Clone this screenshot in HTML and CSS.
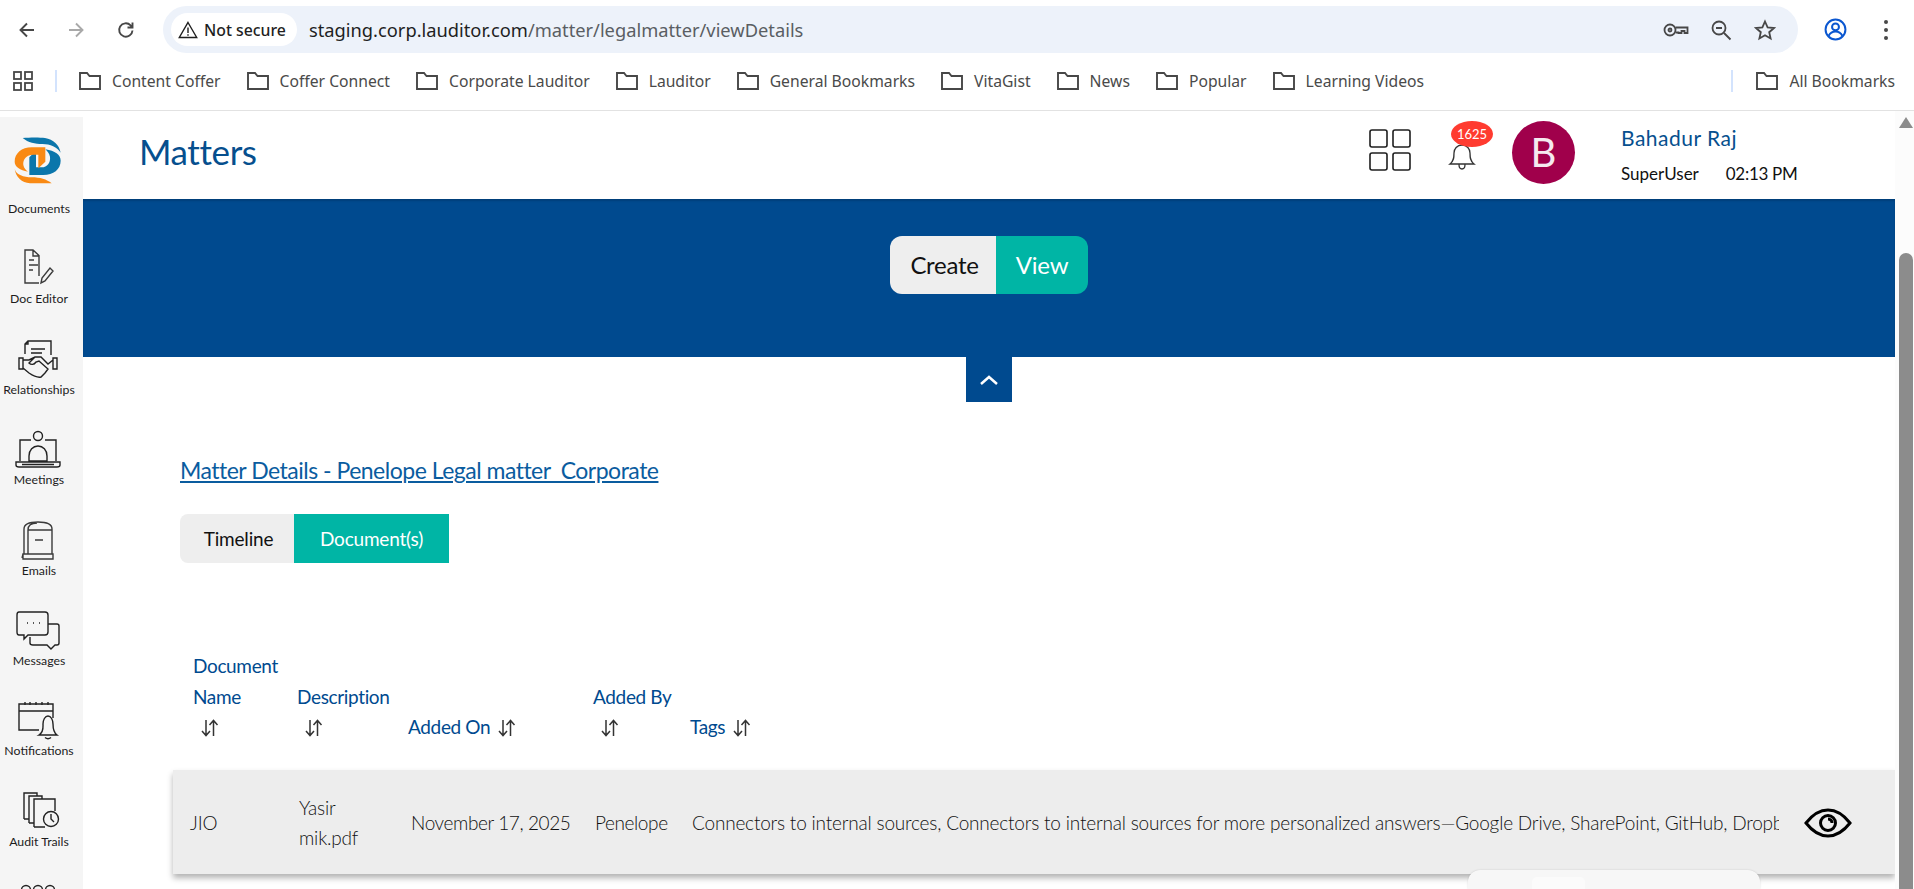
FILE: index.html
```html
<!DOCTYPE html>
<html lang="en">
<head>
<meta charset="utf-8">
<title>Matters</title>
<link rel="stylesheet" href="styles.css">
</head>
<body>
<header class="browser">
  <div class="toolbar">
    <svg class="tb-icon back" viewBox="0 0 20 20"><path d="M17 10H4M10 3.5 3.5 10l6.500 6.500"/></svg>
    <svg class="tb-icon forward" viewBox="0 0 20 20"><path d="M3 10h13M10 3.500l6.500 6.500-6.500 6.500"/></svg>
    <svg class="tb-icon reload" viewBox="0 0 20 20"><path d="M16.500 10.500a6.700 6.700 0 1 1-1.900-5.200L16.500 7.500M16.500 2.500v5h-5"/></svg>
    <div class="omnibox">
      <div class="chip">
        <svg class="warn" viewBox="0 0 20 18"><path d="M10 1.500 18.700 16.500H1.300ZM10 6.500v5.500M10 13.200v1.500"/></svg>
        <span>Not secure</span>
      </div>
      <div class="url"><span class="host">staging.corp.lauditor.com</span>/matter/legalmatter/viewDetails</div>
      <div class="omni-actions">
        <svg class="om-icon key" viewBox="0 0 26 20"><circle cx="7" cy="10" r="5.500"/><circle cx="7" cy="10" r="1.500"/><path d="M12.500 7.500H24.500V13H21.500V11H18.500V13H15.500V12.500H12.500"/></svg>
        <svg class="om-icon zoom" viewBox="0 0 22 22"><circle cx="9" cy="9" r="6.500"/><path d="M6 9h6M14 14l6.500 6.500"/></svg>
        <svg class="om-icon star" viewBox="0 0 22 22"><path d="M11 2.500 13.600 8.400 20 9 15.200 13.200 16.600 19.500 11 16.200 5.400 19.500 6.800 13.200 2 9 8.400 8.400Z"/></svg>
      </div>
    </div>
    <svg class="profile" viewBox="0 0 22 22"><circle cx="11" cy="11" r="9.500"/><circle cx="11" cy="8.500" r="3.300"/><path d="M4.500 17c1.500-3 3.800-4 6.500-4s5 1 6.500 4"/></svg>
    <div class="kebab"><i></i><i></i><i></i></div>
  </div>
  <div class="bookmarks">
    <svg class="apps" viewBox="0 0 20 20"><rect x="1" y="1" width="7" height="7"/><rect x="12" y="1" width="7" height="7"/><rect x="1" y="12" width="7" height="7"/><rect x="12" y="12" width="7" height="7"/></svg>
    <span class="bm-sep"></span>
    <div class="bm"><svg class="folder" viewBox="0 0 24 20"><path d="M2 2H9L11.500 5H22V18H2Z"/></svg>Content Coffer</div>
    <div class="bm"><svg class="folder" viewBox="0 0 24 20"><path d="M2 2H9L11.500 5H22V18H2Z"/></svg>Coffer Connect</div>
    <div class="bm"><svg class="folder" viewBox="0 0 24 20"><path d="M2 2H9L11.500 5H22V18H2Z"/></svg>Corporate Lauditor</div>
    <div class="bm"><svg class="folder" viewBox="0 0 24 20"><path d="M2 2H9L11.500 5H22V18H2Z"/></svg>Lauditor</div>
    <div class="bm"><svg class="folder" viewBox="0 0 24 20"><path d="M2 2H9L11.500 5H22V18H2Z"/></svg>General Bookmarks</div>
    <div class="bm"><svg class="folder" viewBox="0 0 24 20"><path d="M2 2H9L11.500 5H22V18H2Z"/></svg>VitaGist</div>
    <div class="bm"><svg class="folder" viewBox="0 0 24 20"><path d="M2 2H9L11.500 5H22V18H2Z"/></svg>News</div>
    <div class="bm"><svg class="folder" viewBox="0 0 24 20"><path d="M2 2H9L11.500 5H22V18H2Z"/></svg>Popular</div>
    <div class="bm"><svg class="folder" viewBox="0 0 24 20"><path d="M2 2H9L11.500 5H22V18H2Z"/></svg>Learning Videos</div>
    <span class="bm-sep right"></span>
    <div class="bm"><svg class="folder" viewBox="0 0 24 20"><path d="M2 2H9L11.500 5H22V18H2Z"/></svg>All Bookmarks</div>
  </div>
</header>

<div class="app">
  <aside class="sidebar">
    <div class="logo">
      <svg viewBox="0 0 90 85" class="logo-svg">
        <g transform="scale(0.3333)">
          <path class="l-blue" d="M68 54C90 52 120 52 135 54C160 58 178 75 182 98C172 82 150 72 128 72C105 72 85 68 68 54Z"/>
          <path class="l-blue" d="M88 165V112L108 92V142H125C142 142 152 128 150 110C148 100 142 94 136 88C165 92 182 105 182 122C182 148 160 165 130 165Z"/>
          <path class="l-orange" d="M136 82V125L115 145V104H100C80 104 68 118 70 135C72 145 78 150 84 155C60 150 44 140 44 125C44 100 65 82 95 82Z"/>
          <path class="l-orange" d="M44 148C50 165 70 172 95 172C120 172 140 178 155 190C130 190 110 190 90 190C65 188 48 172 44 148Z"/>
        </g>
      </svg>
    </div>
    <nav class="nav">
      <div class="nav-item first"><span>Documents</span></div>
      <div class="nav-item">
        <svg class="ni thin" viewBox="0 0 46 40"><path d="M24 27V6.500L18 1H10V34H24M18 1V7H24M14 11H19M14 16H23M14 21H18M26 34 L27 29 35 19 38 22 30 32Z"/></svg>
        <span>Doc Editor</span>
      </div>
      <div class="nav-item">
        <svg class="ni" viewBox="0 0 46 40"><path d="M10 14V4L13 1H36V15M10 4H13V1M16 9H30M16 13H27M4 18H8V29H4ZM38 18H42V29H38ZM8 20H14L20 17H26L33 24 38 20M20 17 14 23C16 25 19 25 21 22L24 21 33 29 30 33 26 37C22 38 17 35 14 33L8 28"/></svg>
        <span>Relationships</span>
      </div>
      <div class="nav-item">
        <svg class="ni" viewBox="0 0 46 40"><circle cx="23" cy="6" r="4.500"/><path d="M5 31V10H16M30 10H41V31M14 31V26C14 20 18 16 23 16S32 20 32 26V31ZM1 32H45V35C45 36 44 37 42 37H4C2 37 1 36 1 35ZM7 34.500H39" /></svg>
        <span>Meetings</span>
      </div>
      <div class="nav-item">
        <svg class="ni thin" viewBox="0 0 46 40"><path d="M9 33V8C9 3 14 1 23 1S37 3 37 8V33M13 33V9C13 4 17 2 22 2M13 9H37M8 33H38V38H8ZM8 33 7 37M20 19H28"/></svg>
        <span>Emails</span>
      </div>
      <div class="nav-item">
        <svg class="ni" viewBox="0 0 46 40"><path d="M4 1H30Q33 1 33 4V21Q33 24 30 24H13L9 28V24H4Q2 24 2 21V4Q2 1 4 1ZM33 13H42Q44 13 44 15V32Q44 34 42 34H40L36 38 32 34H18Q15 34 15 32V26M12 12H13M18 12H19M24 12H25"/></svg>
        <span>Messages</span>
      </div>
      <div class="nav-item">
        <svg class="ni" viewBox="0 0 46 40"><path d="M24 29H4V3H38V17M4 10H38M10 1V4M15 1V4M21 1V4M27 1V4M33 1V4M24 34C29 31 28 26 28 23C28 19 30 15 33 15S38 19 38 23C38 26 38 31 42 34ZM30 36.500Q33 39 36 36.500"/></svg>
        <span>Notifications</span>
      </div>
      <div class="nav-item">
        <svg class="ni" viewBox="0 0 46 40"><path d="M9 27V1H22V4M14 31V4H27V7M19 35V7H40V19M19 35H30M14 31H19M9 27H14"/><circle cx="36" cy="27" r="7.500"/><path d="M36 22V27L39 30"/></svg>
        <span>Audit Trails</span>
      </div>
      <div class="nav-item last">
        <svg class="ni" viewBox="0 0 46 40"><circle cx="11" cy="8" r="4.500"/><circle cx="23" cy="8" r="4.500"/><circle cx="35" cy="8" r="4.500"/></svg>
      </div>
    </nav>
  </aside>

  <main class="main">
    <div class="topbar">
      <h1 class="page-title">Matters</h1>
      <svg class="grid-icon" viewBox="0 0 43 43"><rect x="1" y="1" width="17" height="17" rx="2"/><rect x="24" y="1" width="17" height="17" rx="2"/><rect x="1" y="24" width="17" height="17" rx="2"/><rect x="24" y="24" width="17" height="17" rx="2"/></svg>
      <div class="bell-wrap">
        <svg class="bell" viewBox="0 0 28 28"><path d="M2 21C6 18 6 14 6 10C6 6 9 2 14 2S22 6 22 10C22 14 22 18 26 21ZM11 21.500Q11 26 14 26T17 21.500"/></svg>
        <span class="badge">1625</span>
      </div>
      <div class="avatar">B</div>
      <div class="user">
        <div class="user-name">Bahadur Raj</div>
        <div class="user-meta"><span>SuperUser</span><span class="user-time">02:13 PM</span></div>
      </div>
    </div>

    <section class="band">
      <div class="toggle">
        <span class="toggle-off">Create</span>
        <span class="toggle-on">View</span>
      </div>
    </section>
    <div class="collapse">
      <svg viewBox="0 0 20 12"><path d="M2 10 10 3l8 7"/></svg>
    </div>

    <a class="matter-link" href="#">Matter Details - Penelope Legal matter_Corporate</a>

    <div class="tabs">
      <span class="tab">Timeline</span>
      <span class="tab active">Document(s)</span>
    </div>

    <div class="table">
      <div class="thead cols">
        <div class="th c1">Document Name <svg class="sort own" viewBox="0 0 18 18"><path d="M5 1V16M1 12 5 16.500 9 12M12.500 17V2M8.500 6 12.500 1.500 16.500 6"/></svg></div>
        <div class="th c2">Description <svg class="sort own" viewBox="0 0 18 18"><path d="M5 1V16M1 12 5 16.500 9 12M12.500 17V2M8.500 6 12.500 1.500 16.500 6"/></svg></div>
        <div class="th c3">Added On <svg class="sort" viewBox="0 0 18 18"><path d="M5 1V16M1 12 5 16.500 9 12M12.500 17V2M8.500 6 12.500 1.500 16.500 6"/></svg></div>
        <div class="th c4">Added By <svg class="sort own" viewBox="0 0 18 18"><path d="M5 1V16M1 12 5 16.500 9 12M12.500 17V2M8.500 6 12.500 1.500 16.500 6"/></svg></div>
        <div class="th c5">Tags <svg class="sort" viewBox="0 0 18 18"><path d="M5 1V16M1 12 5 16.500 9 12M12.500 17V2M8.500 6 12.500 1.500 16.500 6"/></svg></div>
      </div>
      <div class="tr cols">
        <div class="td c1">JIO</div>
        <div class="td c2">Yasir mik.pdf</div>
        <div class="td c3">November 17, 2025</div>
        <div class="td c4">Penelope</div>
        <div class="td c5 clip">Connectors to internal sources, Connectors to internal sources for more personalized answers—Google Drive, SharePoint, GitHub, Dropbox</div>
        <div class="td c6">
          <svg class="eye" viewBox="0 0 48 30"><path d="M2 15C9 6 16 2 24 2S39 6 46 15C39 24 32 28 24 28S9 24 2 15Z"/><circle cx="24" cy="15" r="7.500"/><path d="M24 11a4 4 0 0 1 4 4"/></svg>
        </div>
      </div>
    </div>

    <div class="float-card"><span class="float-tab"></span></div>
  </main>

  <div class="scrollbar">
    <span class="sb-up"></span>
    <span class="sb-thumb"></span>
  </div>
</div>
</body>
</html>
```
FILE: styles.css
```css
* { box-sizing: border-box; }
html, body { margin: 0; height: 889px; overflow: hidden; background: #fff; }
body { font-family: "Lato", "Liberation Sans", sans-serif; color: #222; }

/* browser chrome */
.browser { height: 111px; border-bottom: 1px solid #e2e2e2; font-family: "Noto Sans", "Liberation Sans", sans-serif; }
.toolbar { height: 59px; display: flex; align-items: center; padding-left: 17px; }
.tb-icon { width: 20px; height: 20px; fill: none; stroke: #474747; stroke-width: 1.9; }
.tb-icon.forward { margin-left: 29px; stroke: #a9a9a9; }
.tb-icon.reload { margin-left: 30px; }
.omnibox { margin-left: 27px; width: 1635px; height: 47px; border-radius: 24px; background: #edf2fa; display: flex; align-items: center; padding-left: 8px; }
.chip { width: 126px; height: 33px; border-radius: 17px; background: #fff; display: flex; align-items: center; padding-left: 7px; gap: 6px; font-size: 15.8px; font-weight: 500; color: #1f1f1f; white-space: nowrap; }
.warn { width: 20px; height: 18px; flex: none; fill: none; stroke: #1f1f1f; stroke-width: 1.4; }
.url { margin-left: 12px; font-size: 18.3px; color: #5a5e63; white-space: nowrap; }
.host { color: #1f1f1f; }
.omni-actions { margin-left: auto; display: flex; align-items: center; padding-right: 22px; }
.om-icon { fill: none; stroke: #474747; stroke-width: 1.8; }
.key { width: 26px; height: 20px; }
.zoom { width: 22px; height: 22px; margin-left: 21px; }
.star { width: 22px; height: 22px; margin-left: 22px; }
.profile { width: 23px; height: 23px; margin-left: 26px; fill: none; stroke: #0b57d0; stroke-width: 1.9; }
.kebab { margin-left: 37px; display: flex; flex-direction: column; gap: 4px; }
.kebab i { width: 4px; height: 4px; border-radius: 50%; background: #474747; display: block; }

.bookmarks { height: 51px; display: flex; align-items: center; padding: 0 0 8px 13px; font-size: 15.7px; color: #4a4a4a; white-space: nowrap; }
.apps { width: 20px; height: 20px; fill: none; stroke: #474747; stroke-width: 1.8; }
.bm-sep { width: 2px; height: 22px; background: #d3e3fd; margin: 0 21px 0 22px; }
.bm-sep.right { margin: 0 22px 0 auto; }
.bm { display: flex; align-items: center; gap: 10px; margin-right: 25px; }
.bm:last-child { margin-right: 19px; }
.folder { width: 24px; height: 20px; fill: none; stroke: #474747; stroke-width: 1.9; }

/* app */
.app { height: 778px; display: flex; }
.sidebar { width: 83px; flex: none; margin-top: 6px; background: #f5f5f5; display: flex; flex-direction: column; overflow: hidden; }
.logo { height: 88px; flex: none; }
.logo-svg { width: 90px; height: 85px; display: block; margin-top: 3px; }
.l-blue { fill: #0b76ab; }
.l-orange { fill: #f98a14; }
.nav { flex: 1; overflow: hidden; }
.nav-item { height: 90.4px; padding-right: 5px; display: flex; flex-direction: column; align-items: center; justify-content: flex-end; font-size: 12.3px; line-height: 16px; white-space: nowrap; color: #1c1c1c; }
.nav-item.first { height: 16px; margin-top: -4px; }
.nav-item.last { justify-content: flex-start; padding-top: 32px; height: 90px; }
.ni { width: 46px; height: 40px; margin: 0 2px 2px 0; flex: none; fill: none; stroke: #222; stroke-width: 1.4; }
.ni.thin { stroke: #3b3b3b; }

.main { flex: 1; min-width: 0; position: relative; overflow: hidden; }
.topbar { height: 88px; display: flex; align-items: center; padding-left: 56px; }
.page-title { margin: 0 0 7px; font-size: 35px; font-weight: 400; color: #064f8e; letter-spacing: -.4px; line-height: 1; }
.grid-icon { width: 43px; height: 43px; margin: 0 0 10px auto; fill: none; stroke: #1f1f1f; stroke-width: 1.6; }
.bell-wrap { position: relative; width: 28px; height: 28px; margin: 3px 0 0 36px; }
.bell { width: 28px; height: 28px; fill: none; stroke: #333; stroke-width: 1.3; display: block; }
.badge { position: absolute; left: 3px; top: -22px; width: 42px; height: 26px; border-radius: 50%; background: #ff3b30; color: #fff; font-size: 13px; line-height: 26px; text-align: center; }
.avatar { width: 63px; height: 63px; margin: 0 0 5px 36px; flex: none; border-radius: 50%; background: #a0004b; color: #f5e9ef; font-size: 40px; line-height: 63px; text-align: center; }
.user { margin-left: 46px; width: 274px; flex: none; }
.user-name { font-size: 21px; line-height: 28px; margin-top: -2px; color: #064f8e; letter-spacing: .5px; }
.user-meta { margin-top: 12px; display: flex; gap: 27px; font-size: 17px; line-height: 20px; color: #111; }
.user-time { letter-spacing: -.3px; }

.band { height: 158px; background: #004a8f; padding-top: 37px; box-shadow: inset 0 2px 2px rgba(0,0,0,.15); display: flex; justify-content: center; align-items: flex-start; }
.toggle { display: flex; height: 58px; border-radius: 12px; overflow: hidden; font-size: 24px; line-height: 58px; text-align: center; }
.toggle-off { width: 106px; background: #eee; color: #111; letter-spacing: -.3px; padding-left: 3px; }
.toggle-on { width: 92px; background: #00b5a5; color: #fff; letter-spacing: -.2px; }
.collapse { width: 46px; height: 45px; margin: 0 auto; background: #004a8f; display: flex; align-items: center; justify-content: center; }
.collapse svg { width: 20px; height: 12px; fill: none; stroke: #fff; stroke-width: 2.500; }

.matter-link { display: block; width: max-content; margin: 52px 0 0 97px; font-size: 23px; line-height: 32px; letter-spacing: -.5px; color: #0a5c9f; }
.tabs { display: flex; margin: 28px 0 0 97px; height: 49px; font-size: 19px; line-height: 49px; text-align: center; letter-spacing: -.2px; }
.tab { width: 114px; background: #eee; color: #111; border-radius: 8px 0 0 8px; padding-left: 3px; }
.tab.active { width: 155px; background: #00b5a5; color: #fff; border-radius: 0; padding-left: 0; }

.table { margin: 88px 0 0 90px; }
.cols { display: grid; grid-template-columns: 120px 112px 185px 98px 1091px 116px; }
.thead { align-items: end; font-size: 19px; line-height: 30.5px; color: #004a8f; letter-spacing: -.35px; }
.th.c1 { padding: 0 15px 0 20px; }
.th.c2 { padding-left: 4px; }
.th.c3 { padding-left: 3px; }
.th.c4 { padding-left: 3px; }
.th.c5 { padding-left: 2px; }
.sort { width: 18px; height: 18px; vertical-align: -3px; margin-left: 3px; fill: none; stroke: #333; stroke-width: 1.5; }
.sort.own { display: block; margin: 7px 0 5px 8px; }
.tr { height: 104px; margin-top: 28px; padding-top: 2px; background: #ededed; align-items: center; font-size: 19px; line-height: 30px; font-weight: 300; letter-spacing: -.19px; color: #111; box-shadow: 0 4px 6px rgba(0,0,0,.3); }
.td.c1 { padding-left: 17px; }
.td.c2 { padding-left: 6px; width: 70px; }
.td.c3 { padding-left: 6px; white-space: nowrap; letter-spacing: -.4px; }
.td.c4 { padding-left: 5px; letter-spacing: -.4px; }
.td.c5 { padding-left: 4px; }
.clip { white-space: nowrap; overflow: hidden; }
.td.c6 { padding-left: 25px; display: flex; }
.eye { width: 48px; height: 30px; fill: none; stroke: #000; stroke-width: 3; }

.float-card { position: absolute; right: 135px; bottom: 0; width: 292px; height: 19px; background: #f7f7f7; border-radius: 12px 12px 0 0; box-shadow: 0 0 2px rgba(0,0,0,.15); }
.float-tab { position: absolute; left: 64px; top: 7px; width: 53px; height: 12px; background: #fbfbfb; border-radius: 5px 5px 0 0; }

.scrollbar { width: 19px; flex: none; background: #fcfcfc; display: flex; flex-direction: column; align-items: center; padding-left: 2px; }
.sb-up { margin-top: 6px; width: 0; height: 0; border-left: 7px solid transparent; border-right: 7px solid transparent; border-bottom: 11px solid #8c8c8c; }
.sb-thumb { margin-top: 125px; width: 14px; flex: 1; border-radius: 7px 7px 0 0; background: #8c8c8c; }
```
